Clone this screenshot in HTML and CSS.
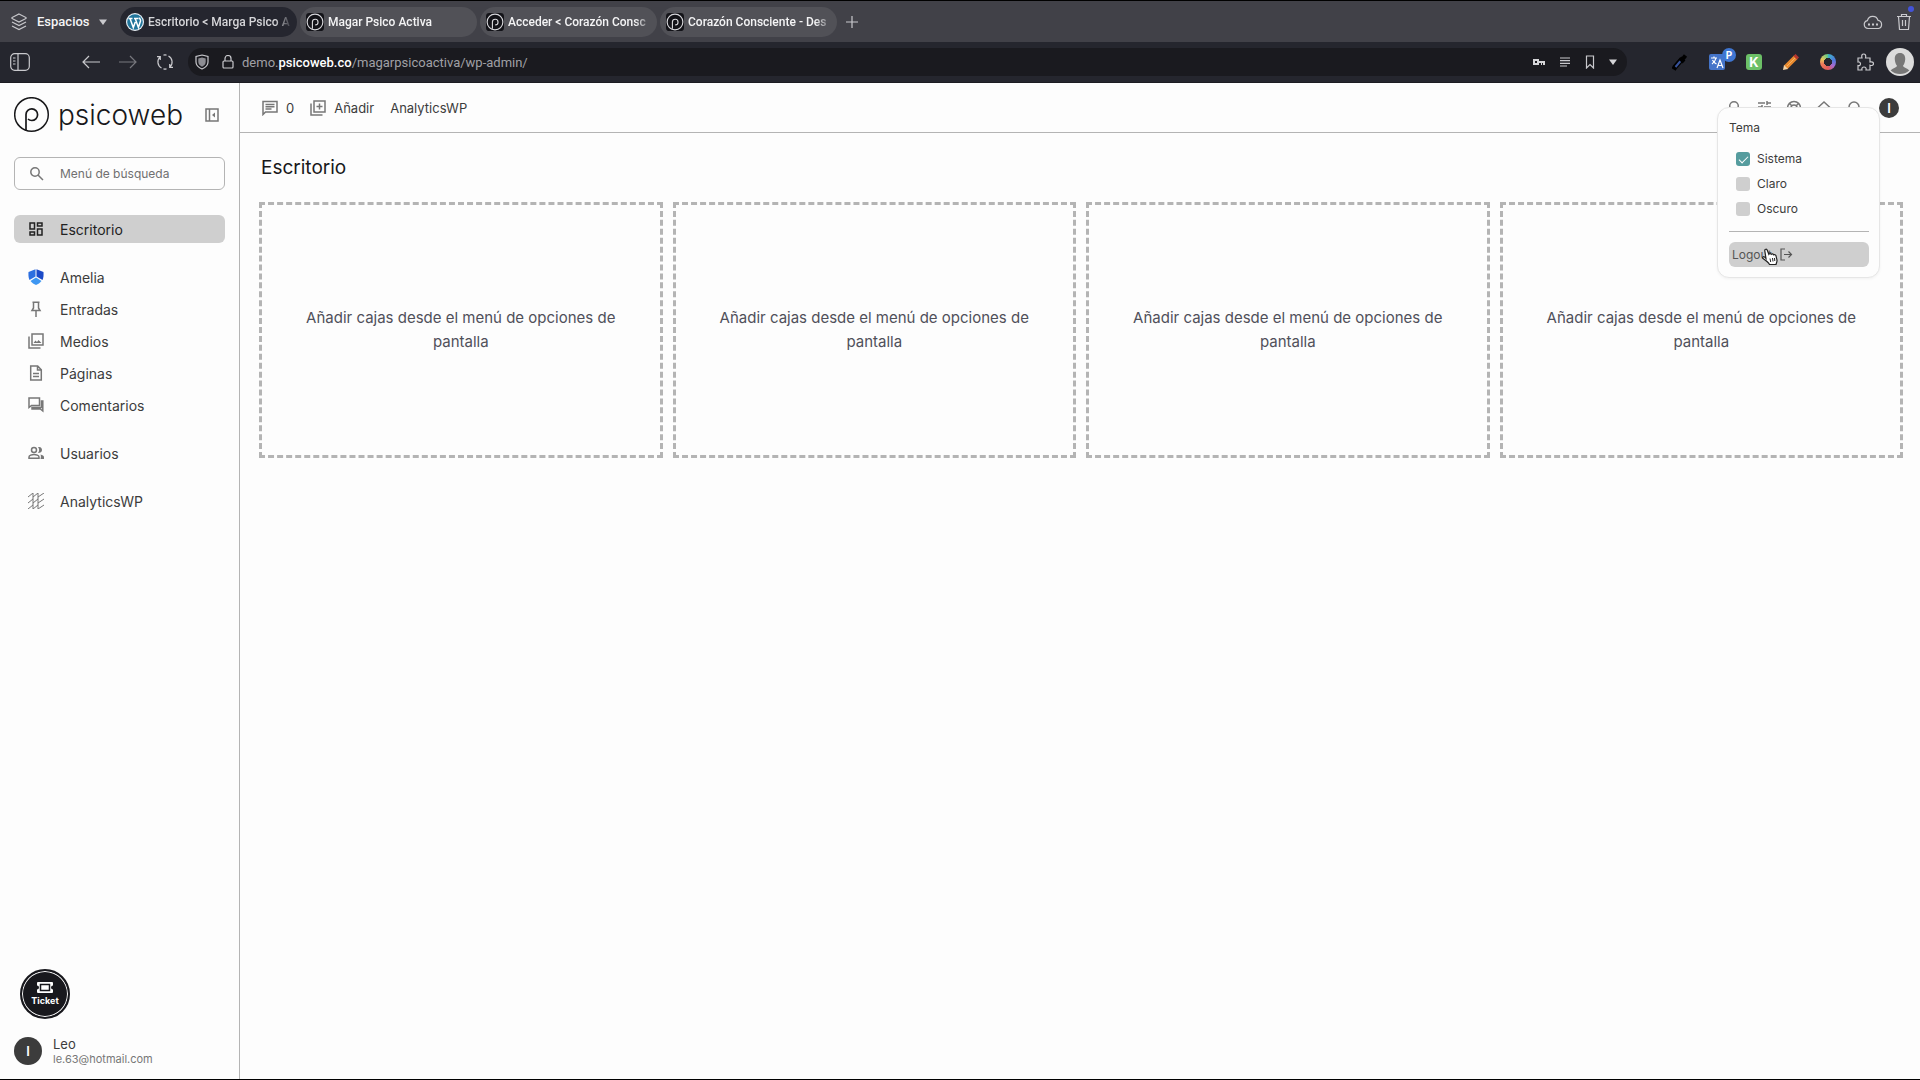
FILE: index.html
```html
<!DOCTYPE html>
<html lang="es">
<head>
	<meta charset="UTF-8">
	<title>Escritorio &lt; Marga Psico Activa</title>
	<link rel="stylesheet" href="styles.css">
</head>
<body>

	<svg width="0" height="0" class="defs">
		<symbol id="logo-p" viewBox="0 0 36 36">
			<circle cx="17.500" cy="17.500" r="16.800" fill="none" stroke="currentColor" stroke-width="1.500"/>
			<path d="M12 33.500V17.500a5.800 5.800 0 1 1 5.800 6c-1.600 0-2.800-.5-3.800-1.500" fill="none" stroke="currentColor" stroke-width="1.700"/>
		</symbol>
		<symbol id="fav-p" viewBox="0 0 16 16">
			<rect width="16" height="16" rx="3" fill="#131318"/>
			<circle cx="8" cy="8" r="7" fill="none" stroke="#d8d8dc" stroke-width="1"/>
			<path d="M5.700 14V8a2.500 2.500 0 1 1 2.500 2.600" fill="none" stroke="#d8d8dc" stroke-width="1"/>
		</symbol>
	</svg>

	<!-- Pestañas -->
	<div class="tabbar">
		<button class="spaces">
			<svg class="i18" viewBox="0 0 18 18"><path d="M9 1 16 4.500v1L9 9 2 5.500v-1zM2 9l7 3.500L16 9M2 13l7 3.500 7-3.500"/></svg>
			<span>Espacios</span>
			<svg class="caret" viewBox="0 0 8 6"><path d="M0 .5h8L4 6z"/></svg>
		</button>
		<div class="tabs">
			<button class="tab active">
				<svg class="fav" viewBox="0 0 18 18">
					<circle cx="9" cy="9" r="9" fill="#e9f1f6"/><circle cx="9" cy="9" r="7.800" fill="#21759b"/>
					<path d="M2.500 5.500h4M8 5.500h4.500M4 5.500l3.300 9 2-5.500M9.200 5.500l3.200 9L14.500 8c.4-1.500-1-2-1-3.500" fill="none" stroke="#fff" stroke-width="1.500"/>
				</svg>
				<span>Escritorio &lt; Marga Psico A</span>
			</button>
			<button class="tab">
				<svg class="fav"><use href="#fav-p"/></svg>
				<span>Magar Psico Activa</span>
			</button>
			<button class="tab">
				<svg class="fav"><use href="#fav-p"/></svg>
				<span>Acceder &lt; Corazón Consc</span>
			</button>
			<button class="tab">
				<svg class="fav"><use href="#fav-p"/></svg>
				<span>Corazón Consciente - Des</span>
			</button>
		</div>
		<button class="newtab" aria-label="Nueva pestaña"><svg width="12" height="12" viewBox="0 0 12 12"><path d="M6 0v12M0 6h12"/></svg></button>
		<div class="tabbar-end">
			<button aria-label="Nube"><svg width="20" height="16" viewBox="0 0 20 16"><path d="M5 14.500a4 4 0 0 1-.6-7.900A5.500 5.500 0 0 1 15 6.300a4.200 4.200 0 0 1 .5 8.200z"/><path d="M6 9.500v2M10 9.500v2M14 9.500v2" stroke-width="2"/></svg></button>
			<button class="trash" aria-label="Papelera"><svg width="16" height="18" viewBox="0 0 16 18"><path d="M1 3.500h14M5.500 3.500v-2h5v2M2.500 3.500l1 13h9l1-13M6.500 7v6M9.500 7v6"/></svg><i class="dot"></i></button>
		</div>
	</div>

	<!-- Barra de direcciones -->
	<div class="toolbar">
		<button class="panel" aria-label="Panel"><svg width="20" height="18" viewBox="0 0 20 18"><rect x=".7" y=".7" width="18.600" height="16.600" rx="4"/><path d="M8 1v16M3 5h2.500M3 8h2.500M3 11h2.500"/></svg></button>
		<div class="nav">
			<button aria-label="Atrás"><svg width="18" height="14" viewBox="0 0 18 14"><path d="M18 7H1M7 1 1 7l6 6"/></svg></button>
			<button class="off" aria-label="Adelante"><svg width="18" height="14" viewBox="0 0 18 14"><path d="M0 7h17M11 1l6 6-6 6"/></svg></button>
			<button aria-label="Recargar"><svg width="18" height="18" viewBox="0 0 18 18"><path d="M4 4A7 7 0 0 0 5.500 15.100M14 14A7 7 0 0 0 12.500 2.900M1 3.700h3.300V7M17 14.300h-3.300V11M7.500 2.100a7 7 0 0 1 3 0M7.500 15.900a7 7 0 0 0 3 0"/></svg></button>
		</div>
		<div class="urlbar">
			<svg width="14" height="16" viewBox="0 0 14 16"><path d="M7 1l6 1.500V8c0 3-2.500 5.500-6 7-3.500-1.500-6-4-6-7V2.500z"/><path d="M7 3.500l3.700 1V8c0 2-1.500 3.500-3.700 4.700C4.800 11.500 3.300 10 3.300 8V4.500z" fill="#8d8d93" stroke="none"/></svg>
			<svg width="12" height="14" viewBox="0 0 12 14"><rect x="1" y="6" width="10" height="7" rx="1"/><path d="M3 6V3.500a3 3 0 0 1 6 0V6"/></svg>
			<div class="url" role="textbox" aria-label="Dirección">demo.<b>psicoweb.co</b>/magarpsicoactiva/wp-admin/</div>
			<div class="url-icons">
				<svg width="12" height="8" viewBox="0 0 12 8"><path d="M0 1h6v2h6v4h-2V5H9v2H8V5H6v2H0zM2 3v2h2V3z" fill="#d5d5d8" stroke="none"/></svg>
				<svg width="12" height="10" viewBox="0 0 12 10"><path d="M1 1h10M1 3.700h10M1 6.300h10M1 9h7"/></svg>
				<svg width="10" height="14" viewBox="0 0 10 14"><path d="M1.500 1h7v12L5 9.500 1.500 13z"/></svg>
				<svg width="8" height="6" viewBox="0 0 8 6"><path d="M0 .5h8L4 6z" fill="#d5d5d8" stroke="none"/></svg>
			</div>
		</div>
		<div class="extensions">
			<button aria-label="Cuentagotas"><svg width="16" height="18" viewBox="0 0 16 18"><path d="M10 6 3 14l-1.500 2.500" stroke="#000" stroke-width="5"/><path d="M8.500 8 3.500 14" stroke="#38539b" stroke-width="2"/><path d="M8 5l4 4M10 7l3.500-4.500" stroke="#000" stroke-width="4"/></svg></button>
			<button class="translate" aria-label="Traducir"><svg width="16" height="16" viewBox="0 0 16 16"><rect width="16" height="16" rx="2" fill="#4474c9" stroke="none"/><path d="M2 4h6M5 2.500V4M3 10c2-1.500 3.500-3.500 4-6M3.500 6c1 2 2 3 4 4M8 14l3-8 3 8M9 11.500h4" stroke="#fff"/></svg><b class="badge">P</b></button>
			<button aria-label="K"><b class="k">K</b></button>
			<button aria-label="Lápiz"><svg width="16" height="16" viewBox="0 0 16 16"><path d="M2.500 13.500 13 3" stroke="#e8892f" stroke-width="5"/><path d="M11.500 1l3.500 3.500" stroke="#b3362f" stroke-width="3"/><path d="M0 16l1-5 4 4z" fill="#f3d3a6" stroke="none"/><path d="M4 12 12 4" stroke="#f7b25e" stroke-width="1"/></svg></button>
			<button aria-label="Color"><i class="ring"></i></button>
			<button aria-label="Extensiones"><svg width="18" height="18" viewBox="0 0 18 18"><path d="M2 5h4c-.8-3 .3-4 1.700-4s2.500 1 1.800 4H14v4c2-.6 3.500.3 3.500 1.700S16 13 14 12.200V17h-4c.5-2-.5-3-2-3s-2.500 1-2 3H2v-4.500c1.800.3 2.500-.6 2.500-1.700S3.500 8.700 2 9z"/></svg></button>
		</div>
		<button class="profile" aria-label="Perfil"><svg width="28" height="28" viewBox="0 0 28 28"><circle cx="14" cy="14" r="14" fill="#dcdcdc"/><path d="M14 5c4 0 5.500 3 5.200 6.500-.2 3-1.200 5-2.200 6.300.5 2.200 4.500 2.500 6.300 4.600A14 14 0 0 1 4.700 22.400C6.500 20.300 10.500 20 11 17.800c-1-1.300-2-3.300-2.200-6.300C8.500 8 10 5 14 5z" fill="#777"/></svg></button>
	</div>

	<div class="page">
		<aside class="sidebar">
			<div class="brand">
				<a href="#" class="brand-link">
					<svg width="36" height="36"><use href="#logo-p"/></svg>
					<span>psicoweb</span>
				</a>
				<button aria-label="Contraer menú"><svg width="14" height="14" viewBox="0 0 14 14"><path d="M1 1h12v12H1zM4.500 1v12"/><path d="M10 4.500v5L7 7z" fill="#777" stroke="none"/></svg></button>
			</div>

			<label class="search">
				<svg width="14" height="14" viewBox="0 0 14 14"><circle cx="5" cy="5" r="4.200"/><path d="M8 8l5 5"/></svg>
				<input type="text" placeholder="Menú de búsqueda" aria-label="Menú de búsqueda">
			</label>

			<nav class="menu">
				<ul>
					<li><a href="#" class="current"><svg viewBox="0 0 16 16"><path d="M2 2h4.500v6H2zM9.500 2H14v3H9.500zM9.500 8H14v6H9.500zM2 11h4.500v3H2z"/></svg>Escritorio</a></li>
				</ul>
				<ul>
					<li><a href="#"><svg viewBox="0 0 16 16"><g stroke="none"><path d="M.5 3 7.500.3v7.200L1.500 11C.5 9 .3 6 .5 3z" fill="#2c6fe0"/><path d="M8.500.3l7 2.700c.2 3 0 6-1 8l-6-3.500z" fill="#1c4bc8"/><path d="M8 8.500l5.500 3.500C12 14 10 15.300 8 16c-2-.7-4-2-5.500-4z" fill="#3e97f2"/></g></svg>Amelia</a></li>
					<li><a href="#"><svg viewBox="0 0 16 16"><path d="M4.500 1.200h7M5.500 1v6L4 9.500h8L10.500 7V1M8 9.500V16"/></svg>Entradas</a></li>
					<li><a href="#"><svg viewBox="0 0 16 16"><path d="M4 1h11v11H4zM1 3.500V15h11.500"/><path d="M5.500 10l2-2.500 1.500 1.500 1.500-2 3 3z" fill="#777" stroke="none"/></svg>Medios</a></li>
					<li><a href="#"><svg viewBox="0 0 16 16"><path d="M2.700 1h7l3.600 3.700V15H2.700zM9.500 1v4h4M5 8.500h6M5 11.500h6"/></svg>Páginas</a></li>
					<li><a href="#"><svg viewBox="0 0 16 16"><path d="M1 1h10.500v7.500H3.500L1 10.500zM14.800 4v10l-2.500-2H4V10.500h9.500V4z"/></svg>Comentarios</a></li>
				</ul>
				<ul>
					<li><a href="#"><svg viewBox="0 0 16 16"><circle cx="6" cy="5" r="2.500"/><path d="M1 13.300V12c0-1.500 3-2.500 5-2.500s5 1 5 2.500v1.300z"/><path d="M10 2c3-.5 4 1 4 3s-1.500 3-4 3c1.500-2 1.500-4 0-6zM12.500 9.500c2 .5 3.500 1.300 3.500 2.500v2h-3.500c.5-2 .5-3 0-4.500z" fill="#777" stroke="none"/></svg>Usuarios</a></li>
				</ul>
				<ul>
					<li><a href="#"><svg viewBox="0 0 16 16"><path d="M0 4l5-4v4l5-4v4l6-4M0 10l5-4v4l5-4v4l6-4M0 16l5-4v4l5-4v4l6-4M5 4v2M10 4v2M5 10v2M10 10v2" stroke-width="1"/></svg>AnalyticsWP</a></li>
				</ul>
			</nav>

			<div class="sidebar-foot">
				<button class="ticket">
					<svg width="16" height="11" viewBox="0 0 16 11"><path d="M1 0h14a1 1 0 0 1 1 1v2.500a2 2 0 0 0 0 4V10a1 1 0 0 1-1 1H1a1 1 0 0 1-1-1V7.500a2 2 0 0 0 0-4V1a1 1 0 0 1 1-1z" fill="#fff"/><rect x="3.500" y="2.500" width="9" height="6" fill="none" stroke="#18181d"/></svg>
					Ticket
				</button>
				<div class="user">
					<span class="avatar avatar-lg">I</span>
					<div>
						<div class="user-name">Leo</div>
						<div class="user-mail">le.63@hotmail.com</div>
					</div>
				</div>
			</div>
		</aside>

		<div class="content">
			<header class="topbar">
				<a href="#"><svg width="16" height="16" viewBox="0 0 16 16"><path d="M1 1.500h14v10.500H3.500L1 14.500zM3.500 4.500h9M3.500 6.800h9M3.500 9h6"/></svg>0</a>
				<a href="#"><svg width="16" height="16" viewBox="0 0 16 16"><path d="M4 1h11v11H4zM1 3.500V15h11.500M9.500 3.500v6M6.500 6.500h6"/></svg>Añadir</a>
				<a href="#">AnalyticsWP</a>
				<div class="actions">
					<button aria-label="Buscar"><svg viewBox="0 0 18 18"><circle cx="9" cy="7" r="4.300"/><path d="M12 10l4 5"/></svg></button>
					<button aria-label="Opciones"><svg viewBox="0 0 18 18"><path d="M3 4h7M12 4h4M12 2v4M3 8h4M9 8h7M7 6v4M3 13h7M12 11v4"/></svg></button>
					<button aria-label="Ayuda"><svg viewBox="0 0 18 18"><circle cx="9" cy="9" r="6.500"/><circle cx="9" cy="9" r="3"/><path d="M4.500 4.500l2.300 2.300M13.500 4.500l-2.300 2.300"/></svg></button>
					<button aria-label="Ver sitio"><svg viewBox="0 0 18 18"><path d="M3 8.500l6-5.500 6 5.500V15H3z"/></svg></button>
					<button aria-label="Avisos"><svg viewBox="0 0 18 18"><path d="M4 13V8a5 5 0 0 1 10 0v5z"/></svg></button>
				</div>
				<button class="avatar">I</button>

				<!-- Menú del usuario -->
				<div class="dropdown">
					<div>Tema</div>
					<div class="themes">
						<label><input type="checkbox" checked>Sistema</label>
						<label><input type="checkbox">Claro</label>
						<label><input type="checkbox">Oscuro</label>
					</div>
					<hr>
					<a href="#" class="logout">Logout
						<svg width="13" height="13" viewBox="0 0 13 13"><path d="M5 1H1v11h4M4 6.500h7M8.500 3.500l3 3-3 3"/></svg>
					</a>
					<svg class="cursor" width="18" height="18" viewBox="0 0 18 18"><path d="M5 10.500 3.800 2.800c-.3-1.800 2-2.200 2.500-.5l1.500 4c.5-1 2-1 2.500 0 .7-.7 2-.5 2.300.5 1-.6 2.200 0 2.400 1.200l1 4c.2 1.500-.5 2.500-1 4.500H8.500C7.500 14.500 5 12.500 2 10.500c-1-1.300.4-2.300 1.500-1.600z" fill="#fff" stroke="#222" stroke-width="1.200"/><path d="M9 10.500l.7 3.500M11.500 10l.5 3.500M13.500 10l.3 3" stroke="#222" stroke-width="1"/></svg>
				</div>
			</header>

			<main>
				<h1>Escritorio</h1>
				<div class="boxes">
					<div class="box">Añadir cajas desde el menú de opciones de pantalla</div>
					<div class="box">Añadir cajas desde el menú de opciones de pantalla</div>
					<div class="box">Añadir cajas desde el menú de opciones de pantalla</div>
					<div class="box">Añadir cajas desde el menú de opciones de pantalla</div>
				</div>
			</main>
		</div>
	</div>

</body>
</html>
```

FILE: styles.css
```css
* {
	box-sizing: border-box;
}

body {
	margin: 0;
	min-height: 100vh;
	display: flex;
	flex-direction: column;
	border-top: 1px solid #000;
	border-bottom: 1px solid #000;
	background: #fdfdfd;
	color: #3c3c3c;
	font-family: Inter, "Liberation Sans", sans-serif;
	font-size: 14px;
}

a {
	color: inherit;
	text-decoration: none;
}

button {
	display: flex;
	align-items: center;
	justify-content: center;
	border: 0;
	padding: 0;
	background: none;
	color: inherit;
	font: inherit;
	cursor: pointer;
}

svg {
	flex: none;
	fill: none;
	stroke: #777;
	stroke-width: 1.5;
}

.defs {
	position: absolute;
}

/* pestañas */

.tabbar {
	display: flex;
	align-items: center;
	height: 41px;
	padding: 0 8px 0 10px;
	background: #414148;
	color: #f4f4f5;
	font-family: Roboto, "Liberation Sans", sans-serif;
	font-size: 13px;
	font-weight: 500;
}

.tabbar svg, .toolbar svg {
	stroke: #c9c9cd;
	stroke-width: 1.2;
}

.spaces {
	width: 110px;
	justify-content: flex-start;
	gap: 9px;
	font-size: 13px;
}

.i18 {
	width: 18px;
	height: 18px;
}

.tabbar .caret {
	width: 8px;
	height: 6px;
	fill: #c9c9cd;
	stroke: none;
}

.tabs {
	display: flex;
	gap: 3px;
	font-size: 12px;
}

.tab {
	width: 177px;
	height: 30px;
	padding: 0 4px 0 6px;
	justify-content: flex-start;
	gap: 4px;
	border-radius: 15px;
	background: #515157;
}

.tab.active {
	background: #25262f;
	color: #d6d6d9;
}

.tab span {
	flex: 1;
	overflow: hidden;
	text-align: left;
	white-space: nowrap;
	-webkit-mask-image: linear-gradient(to left, transparent, #000 18px);
	mask-image: linear-gradient(to left, transparent, #000 18px);
}

.tabbar .fav {
	width: 18px;
	height: 18px;
	stroke: none;
}

.newtab {
	margin-left: 9px;
}

.tabbar-end {
	display: flex;
	align-items: center;
	gap: 13px;
	margin-left: auto;
}

.trash {
	position: relative;
}

.dot {
	position: absolute;
	top: -7px;
	right: -2px;
	width: 6px;
	height: 6px;
	border-radius: 50%;
	background: #4353d8;
}

/* direcciones */

.toolbar {
	display: flex;
	align-items: center;
	height: 41px;
	padding: 0 6px 0 10px;
	border-bottom: 1px solid #1c1c22;
	background: #25262e;
}

.nav {
	display: flex;
	gap: 19px;
	margin: 0 14px 0 52px;
}

.nav .off {
	opacity: 0.5;
}

.urlbar {
	flex: 1;
	display: flex;
	align-items: center;
	height: 28px;
	padding: 0 10px 0 7px;
	gap: 13px;
	border-radius: 14px;
	background: #1a1a1f;
}

.url {
	flex: 1;
	margin-left: -5px;
	color: #a0a0a5;
	font-family: Roboto, "Liberation Sans", sans-serif;
	font-size: 13px;
}

.url b {
	color: #fff;
	font-weight: 500;
}

.url-icons {
	display: flex;
	align-items: center;
	gap: 14px;
}

.extensions {
	display: flex;
	gap: 15px;
	margin: 0 10px 0 42px;
}

.extensions button {
	width: 22px;
	height: 22px;
}

.translate {
	position: relative;
}

.badge {
	position: absolute;
	top: -3px;
	right: -8px;
	width: 14px;
	height: 14px;
	border-radius: 50%;
	background: #3f76d2;
	color: #fff;
	font-size: 10px;
	line-height: 14px;
}

.k {
	width: 16px;
	height: 16px;
	border-radius: 3px;
	background: #6cc067;
	color: #fff;
	font-size: 13px;
	line-height: 16px;
}

.ring {
	width: 16px;
	height: 16px;
	border-radius: 50%;
	background: radial-gradient(#25262e 34%, transparent 38%), conic-gradient(#40b5c5, #4d79dc 20%, #a56ad0 35%, #e35c58 50%, #ef7d5b 70%, #e9c65c 82%, #58c98a);
}

.profile svg {
	stroke: none;
}

/* barra lateral */

.page {
	flex: 1;
	display: flex;
}

.sidebar {
	display: flex;
	flex-direction: column;
	width: 240px;
	padding: 14px 14px 13px;
	border-right: 1px solid #b4b4b4;
}

.brand {
	display: flex;
	align-items: center;
	justify-content: space-between;
	padding-right: 6px;
}

.brand-link {
	display: flex;
	align-items: center;
	gap: 8px;
	color: #18181a;
	font-size: 28px;
	font-weight: 300;
	line-height: 36px;
}

.brand-link svg {
	stroke: none;
}

.search {
	display: flex;
	align-items: center;
	gap: 16px;
	height: 33px;
	margin: 24px 0 25px;
	padding: 0 15px;
	border: 1px solid #b4b4b4;
	border-radius: 6px;
}

.search input {
	flex: 1;
	min-width: 0;
	padding: 0;
	border: 0;
	outline: 0;
	background: none;
	font: inherit;
	font-size: 12px;
}

.search input::placeholder {
	color: #707070;
}

.menu ul {
	display: flex;
	flex-direction: column;
	gap: 4px;
	margin: 0 0 20px;
	padding: 0;
	list-style: none;
}

.menu a {
	display: flex;
	align-items: center;
	gap: 16px;
	height: 28px;
	padding: 0 14px;
	border-radius: 6px;
}

.menu svg {
	width: 16px;
	height: 16px;
}

.menu .current {
	background: #cfcfcf;
	color: #222;
}

.menu .current svg {
	stroke: #222;
}

.sidebar-foot {
	margin-top: auto;
}

.ticket {
	flex-direction: column;
	gap: 2px;
	width: 50px;
	height: 50px;
	margin: 0 6px 17px;
	border: 2px solid #18181d;
	border-radius: 50%;
	background: #18181d;
	box-shadow: inset 0 0 0 1px #fff;
	color: #fff;
	font-size: 9px;
	font-weight: 700;
}

.ticket svg {
	stroke: none;
}

.user {
	display: flex;
	align-items: center;
	gap: 11px;
}

.user-name {
	font-size: 13px;
	line-height: 16px;
}

.user-mail {
	color: #777;
	font-size: 11px;
	line-height: 14px;
}

.avatar {
	display: flex;
	align-items: center;
	justify-content: center;
	width: 20px;
	height: 20px;
	border-radius: 50%;
	background: #3c3c3c;
	color: #fff;
	font-size: 13px;
	font-weight: 600;
}

.avatar-lg {
	width: 28px;
	height: 28px;
}

/* contenido */

.content {
	flex: 1;
	min-width: 0;
}

.topbar {
	position: relative;
	display: flex;
	align-items: center;
	gap: 16px;
	height: 50px;
	padding: 0 21px 0 22px;
	border-bottom: 1px solid #b4b4b4;
	font-size: 13px;
}

.topbar > a {
	display: flex;
	align-items: center;
	gap: 8px;
}

.actions {
	display: flex;
	gap: 12px;
	margin-left: auto;
}

.actions svg {
	width: 18px;
	height: 18px;
}

.dropdown {
	position: absolute;
	top: 24px;
	right: 40px;
	width: 163px;
	padding: 12px 10px 10px 11px;
	border: 1px solid #e6e6e6;
	border-radius: 12px;
	background: #fdfdfd;
	box-shadow: 0 1px 3px rgba(0, 0, 0, 0.05);
	font-size: 12px;
	line-height: 16px;
}

.themes {
	display: flex;
	flex-direction: column;
	gap: 9px;
	margin: 15px 7px 0;
}

.themes label {
	display: flex;
	align-items: center;
	gap: 7px;
}

.themes input {
	appearance: none;
	display: grid;
	place-items: center;
	width: 14px;
	height: 14px;
	margin: 0;
	border-radius: 3px;
	background: #cfcfcf;
}

.themes input:checked {
	background: #559c9e;
}

.themes input:checked::after {
	content: "";
	width: 8px;
	height: 4px;
	margin-bottom: 2px;
	border: solid #fff;
	border-width: 0 0 1px 1px;
	transform: rotate(-45deg);
}

.dropdown hr {
	margin: 14px 0 10px;
	border: 0;
	border-top: 1px solid #b4b4b4;
}

.logout {
	display: flex;
	align-items: center;
	gap: 8px;
	height: 25px;
	padding: 0 3px;
	border-radius: 6px;
	background: #cfcfcf;
	color: #555;
}

.logout svg {
	stroke: #555;
	stroke-width: 1.2;
}

.cursor {
	position: absolute;
	top: 140px;
	left: 43px;
}

main {
	padding: 21px 17px 20px 19px;
}

h1 {
	margin: 0 0 20px;
	padding-left: 2px;
	color: #18181a;
	font-size: 19px;
	font-weight: 400;
	line-height: 28px;
}

.boxes {
	display: grid;
	grid-template-columns: repeat(4, 1fr);
	gap: 10px;
}

.box {
	display: flex;
	align-items: center;
	justify-content: center;
	min-height: 256px;
	padding: 0 32px;
	border: 3px dashed #b4b4b4;
	color: #50505a;
	font-size: 15px;
	line-height: 24px;
	text-align: center;
}
```
